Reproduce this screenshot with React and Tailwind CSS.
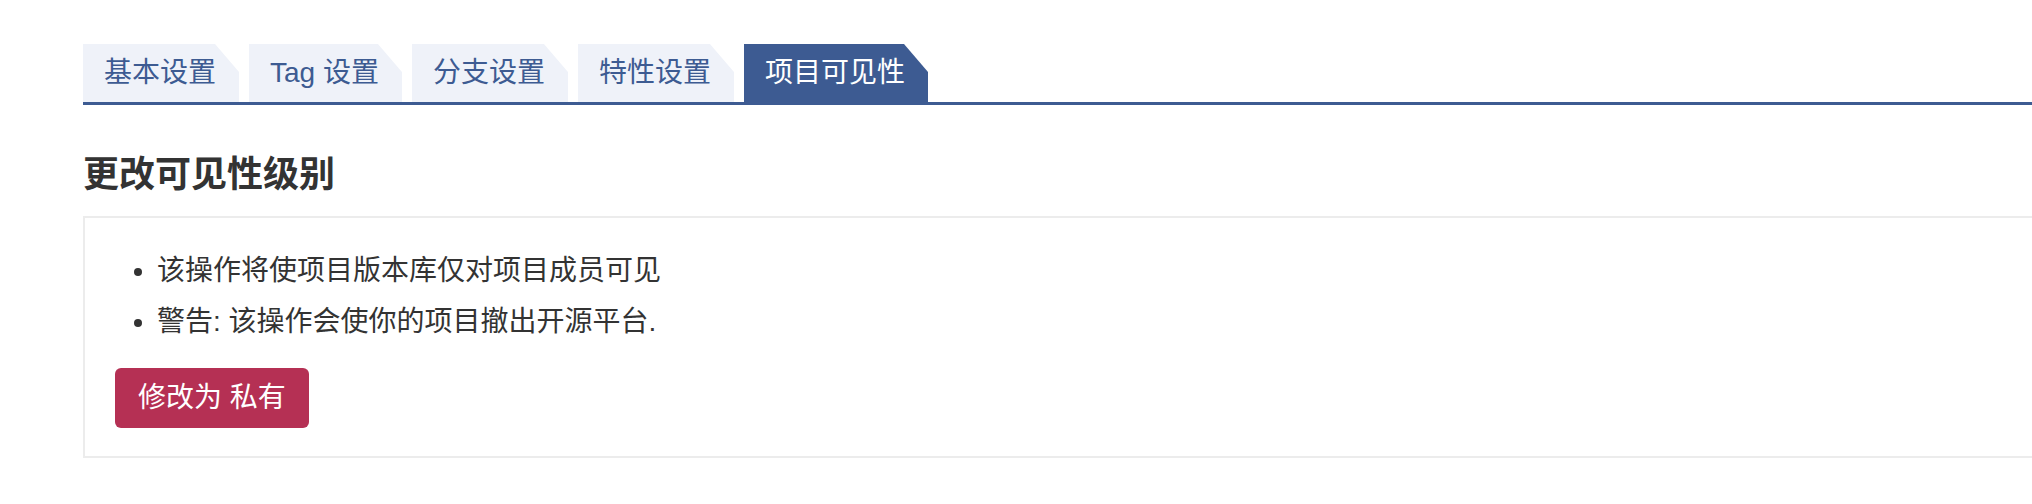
import React from "react";

const tabs = ["基本设置", "Tag 设置", "分支设置", "特性设置", "项目可见性"];

const Tab = ({ label, active }) => {
  return (
    <div
      className={
        "h-[58px] pl-[21px] pr-[23px] text-[28px] leading-[58px] whitespace-nowrap [clip-path:polygon(0_0,calc(100%_-_24px)_0,100%_28px,100%_100%,0_100%)] " +
        (active ? "bg-[#3d5b92] text-white" : "bg-[#eff2f9] text-[#3d5b92]")
      }
    >
      {label}
    </div>
  );
};

const App = () => {
  return (
    <div className="w-[2032px] h-[504px] overflow-hidden bg-white pt-[44px] pl-[83px] font-['Liberation_Sans','Noto_Sans_CJK_SC',sans-serif] text-[#333]">
      <div className="flex gap-[10px] border-b-[3px] border-[#3d5b92]">
        {tabs.map((t, i) => (
          <Tab key={t} label={t} active={i === tabs.length - 1} />
        ))}
      </div>

      <h2 className="mt-[45px] mb-[16px] text-[36px] leading-[50px] font-bold text-[#333]">
        更改可见性级别
      </h2>

      <div className="border-2 border-r-0 border-[#ececec] pt-[27px] pl-[30px] pb-[28px]">
        <ul className="list-disc pl-[42px] text-[28px] leading-[51px]">
          <li>该操作将使项目版本库仅对项目成员可见</li>
          <li>警告: 该操作会使你的项目撤出开源平台.</li>
        </ul>
        <button className="mt-[21px] h-[60px] px-[23px] rounded-[6px] bg-[#b53054] text-white text-[28px] leading-[60px]">
          修改为 私有
        </button>
      </div>
    </div>
  );
};

export default App;
